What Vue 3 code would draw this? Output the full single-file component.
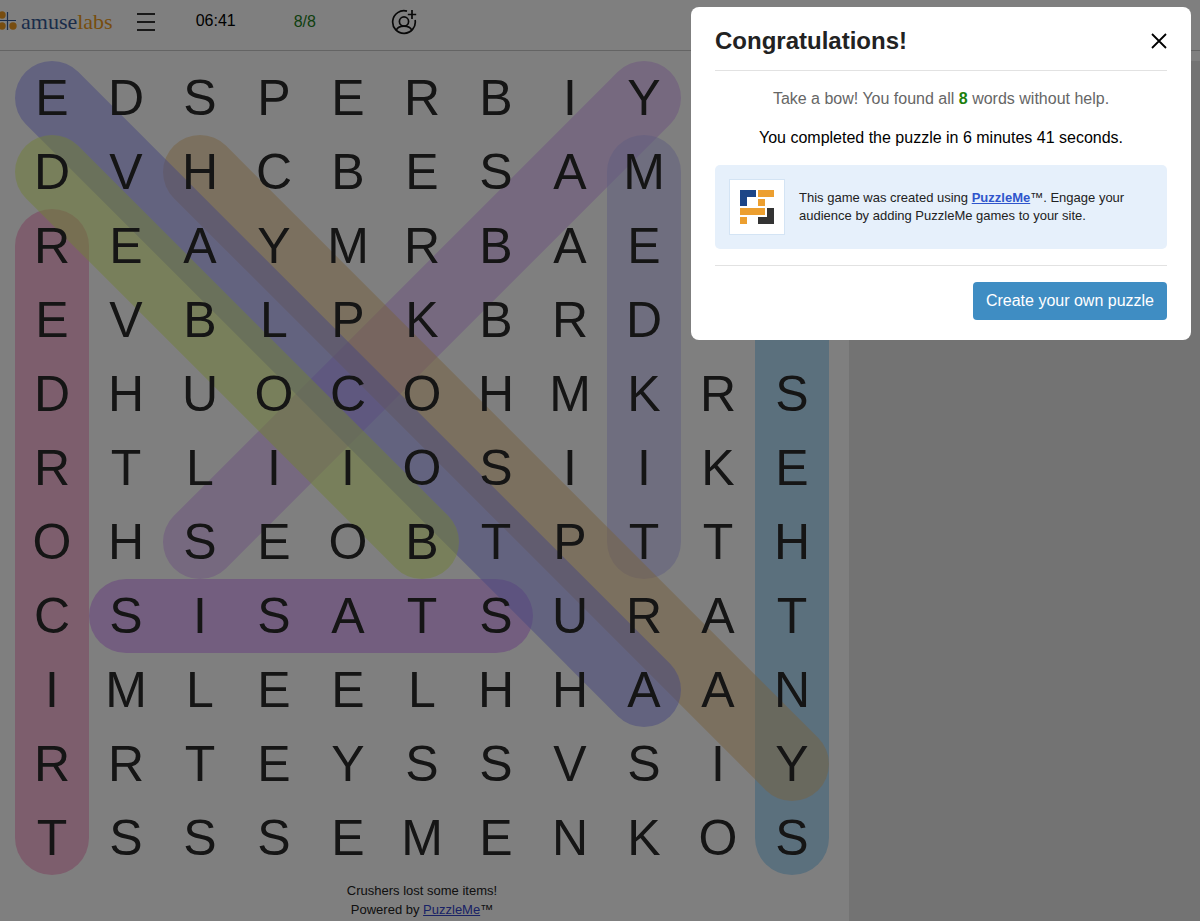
<template>
  <div class="page">
    <header class="top-bar">
      <a class="brand" href="#" aria-label="amuselabs">
        <svg class="brand-mark" width="25" height="22" viewBox="0 0 25 22">
          <path d="M0 9.5h24M15.5 1v18" stroke="#345995" stroke-width="1.2" fill="none" />
          <circle cx="10" cy="4" r="3.7" fill="#ef9b20" />
          <circle cx="10" cy="15" r="3.7" fill="#ef9b20" />
          <circle cx="21" cy="15" r="3.7" fill="#ef9b20" />
        </svg>
        <span class="brand-name">amuse<span class="brand-labs">labs</span></span>
      </a>
      <button class="icon-button menu-button" aria-label="Menu">
        <svg width="18" height="18" viewBox="0 0 18 18">
          <path d="M0 1h18M0 9h18M0 17h18" stroke="#333" stroke-width="2" />
        </svg>
      </button>
      <span class="timer">06:41</span>
      <span class="score">8/8</span>
      <button class="icon-button" aria-label="Invite a friend">
        <svg width="26" height="26" viewBox="0 0 26 26" fill="none" stroke="#111" stroke-width="1.7">
          <path d="M16 2.1A11.3 11.3 0 1 0 24.1 11" />
          <circle cx="13" cy="12.5" r="4.600" />
          <path d="M5.200 21.500c1-2.900 4-4.300 7.800-4.300s6.800 1.400 7.800 4.300" />
          <path d="M21 1v9M16.800 5.500h8.400" />
        </svg>
      </button>
    </header>

    <main class="content">
      <section class="puzzle">
        <div class="board">
          <svg class="highlights" viewBox="0 0 11 11">
            <line
              v-for="word in foundWords"
              :key="word.color"
              :x1="word.from[0] + 0.5"
              :y1="word.from[1] + 0.5"
              :x2="word.to[0] + 0.5"
              :y2="word.to[1] + 0.5"
              :stroke="word.color"
            />
          </svg>
          <template v-for="(row, rowIndex) in rows" :key="rowIndex">
            <span v-for="(letter, index) in row" :key="index" class="cell">{{ letter }}</span>
          </template>
        </div>
        <footer class="credits">
          <div>Crushers lost some items!</div>
          <div>Powered by <a href="#">PuzzleMe</a>™</div>
        </footer>
      </section>
      <aside class="side-panel"></aside>
    </main>

    <div class="backdrop">
      <div class="modal" role="dialog" aria-labelledby="modal-title">
        <div class="modal-header">
          <h2 id="modal-title">Congratulations!</h2>
          <button class="icon-button" aria-label="Close">
            <svg width="16" height="16" viewBox="0 0 16 16">
              <path d="M1 1l14 14M15 1L1 15" stroke="#000" stroke-width="1.8" />
            </svg>
          </button>
        </div>
        <p class="result">Take a bow! You found all <b>8</b> words without help.</p>
        <p class="time">You completed the puzzle in 6 minutes 41 seconds.</p>
        <div class="promo">
          <div class="promo-logo">
            <svg width="34" height="34" viewBox="0 0 34 34">
              <path d="M0 0h16v7H7v9H0z" fill="#1c4587" />
              <path d="M18 0h16v7H18zM18 9h7v7h-7zM0 18h25v7H0zM0 27h7v7H0z" fill="#ec9f30" />
              <path d="M27 18h7v16H18v-7h9z" fill="#333" />
            </svg>
          </div>
          <p>
            This game was created using <a href="#">PuzzleMe</a>™. Engage your audience by adding
            PuzzleMe games to your site.
          </p>
        </div>
        <div class="modal-footer">
          <button class="create-button">Create your own puzzle</button>
        </div>
      </div>
    </div>
  </div>
</template>

<script setup>
const rows = [
  'EDSPERBIY  ',
  'DVHCBESAM  ',
  'REAYMRBAE  ',
  'EVBLPKBRD  ',
  'DHUOCOHMKRS',
  'RTLIIOSIIKE',
  'OHSEOBTPTTH',
  'CSISATSURAT',
  'IMLEELHHAAN',
  'RRTEYSSVSIY',
  'TSSSEMENKOS'
]

// from / to are [column, row], later words are painted on top
const foundWords = [
  { from: [8, 0], to: [2, 6], color: '#dca6ff' },
  { from: [8, 1], to: [8, 6], color: '#bfbcff' },
  { from: [10, 2], to: [10, 10], color: '#70c2f7' },
  { from: [1, 7], to: [6, 7], color: '#d07cff' },
  { from: [2, 1], to: [10, 9], color: '#f0c480' },
  { from: [0, 0], to: [8, 8], color: '#9090ff' },
  { from: [0, 2], to: [0, 10], color: '#f87cb8' },
  { from: [0, 1], to: [5, 6], color: '#e4ff70' }
]
</script>

<style>
body {
  margin: 0;
  font-family: "Liberation Sans", Arial, sans-serif;
}
</style>

<style scoped>
.page {
  min-height: 100vh;
  display: flex;
  flex-direction: column;
  background: #fff;
  color: #222;
}

.top-bar {
  display: flex;
  align-items: center;
  height: 44px;
  padding-bottom: 6px;
  margin-bottom: 10px;
  border-bottom: 1px solid #c8c8c8;
  overflow: hidden;
}

.brand {
  display: flex;
  align-items: center;
  margin-left: -8px;
  margin-right: 24px;
  text-decoration: none;
}

.brand-mark {
  margin-right: 4px;
}

.brand-name {
  font-family: "Liberation Serif", "Times New Roman", serif;
  font-size: 22px;
  line-height: 24px;
  color: #345995;
}

.brand-labs {
  color: #ef9b20;
}

.icon-button {
  display: flex;
  padding: 0;
  border: 0;
  background: none;
}

.timer {
  margin-left: 41px;
  padding-bottom: 2px;
  font-size: 16px;
  color: #000;
}

.score {
  margin: 0 75px 0 58px;
  font-size: 16px;
  color: #1c801c;
}

.content {
  flex: 1;
  display: flex;
}

.puzzle {
  padding: 0 20px 2px 15px;
}

.board {
  position: relative;
  display: grid;
  grid-template-columns: repeat(11, 74px);
  grid-auto-rows: 74px;
}

.highlights {
  position: absolute;
  inset: 0;
  width: 100%;
  height: 100%;
  stroke-width: 1;
  stroke-linecap: round;
}

.highlights line {
  stroke-opacity: 0.5;
}

.cell {
  position: relative;
  font-size: 50px;
  line-height: 74px;
  text-align: center;
  color: #2a2a2a;
}

.credits {
  padding-top: 6px;
  font-size: 13px;
  line-height: 19px;
  text-align: center;
}

.credits a {
  color: #3344cc;
}

.side-panel {
  flex: 1;
  background: #e6e6e6;
}

.backdrop {
  position: fixed;
  inset: 0;
  display: flex;
  justify-content: flex-end;
  align-items: flex-start;
  padding: 7px 9px;
  background: rgba(0, 0, 0, 0.5);
}

.modal {
  box-sizing: border-box;
  width: 500px;
  padding: 20px 24px;
  border-radius: 8px;
  background: #fff;
}

.modal-header {
  display: flex;
  justify-content: space-between;
  align-items: center;
  padding-bottom: 15px;
  border-bottom: 1px solid #e2e2e2;
}

.modal-header h2 {
  margin: 0;
  font-size: 24px;
  line-height: 28px;
}

.result,
.time {
  margin: 16px 0 15px;
  font-size: 16px;
  line-height: 24px;
  text-align: center;
}

.result {
  margin-bottom: 0;
  color: #666;
}

.result b {
  color: #1c800c;
}

.time {
  margin-top: 15px;
  color: #000;
}

.promo {
  display: flex;
  align-items: center;
  gap: 14px;
  margin-bottom: 16px;
  padding: 14px;
  border-radius: 5px;
  background: #e6f0fb;
}

.promo-logo {
  padding: 10px;
  display: flex;
  border: 1px solid #d4e4f4;
  background: #fff;
}

.promo p {
  flex: 1;
  margin: 0;
  font-size: 13px;
  line-height: 18px;
}

.promo a {
  font-weight: bold;
  color: #2f55cc;
}

.modal-footer {
  display: flex;
  justify-content: flex-end;
  padding-top: 16px;
  border-top: 1px solid #e2e2e2;
}

.create-button {
  padding: 0 13px;
  border: 0;
  border-radius: 4px;
  background: #3f8dc3;
  color: #fff;
  font-family: inherit;
  font-size: 16px;
  line-height: 38px;
}
</style>
